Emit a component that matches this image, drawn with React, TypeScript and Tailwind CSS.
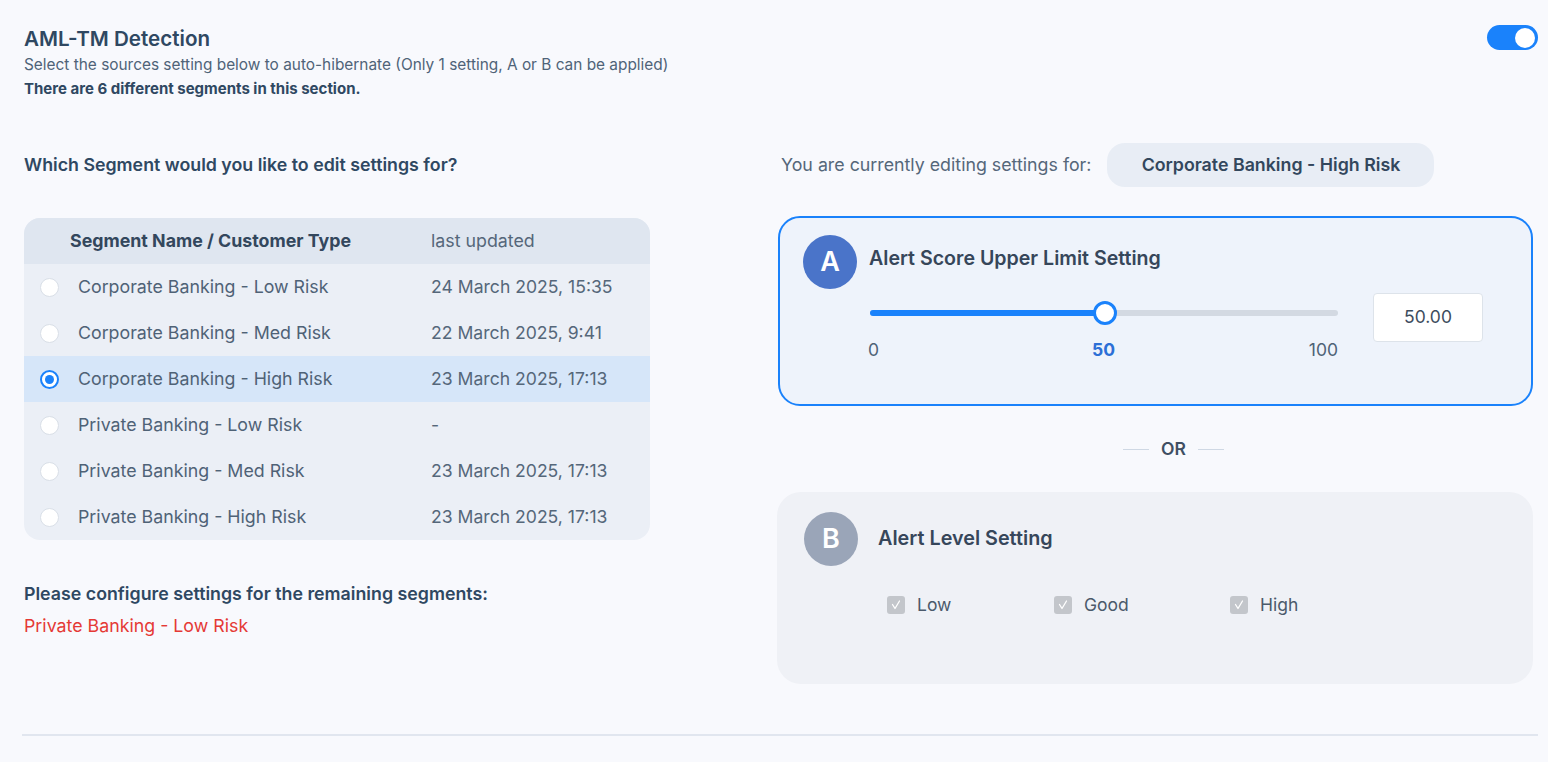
import { FC } from 'react';

type Segment = {
  name: string;
  updated: string;
};

const segments: Segment[] = [
  { name: 'Corporate Banking - Low Risk', updated: '24 March 2025, 15:35' },
  { name: 'Corporate Banking - Med Risk', updated: '22 March 2025, 9:41' },
  { name: 'Corporate Banking - High Risk', updated: '23 March 2025, 17:13' },
  { name: 'Private Banking - Low Risk', updated: '-' },
  { name: 'Private Banking - Med Risk', updated: '23 March 2025, 17:13' },
  { name: 'Private Banking - High Risk', updated: '23 March 2025, 17:13' },
];

const selectedIndex = 2;

const Radio: FC<{ checked: boolean }> = ({ checked }) =>
  checked ? (
    <span className="flex h-[19px] w-[19px] items-center justify-center rounded-full border-2 border-[#1a82fb] bg-white">
      <span className="block h-[9px] w-[9px] rounded-full bg-[#1a82fb]" />
    </span>
  ) : (
    <span className="block h-[19px] w-[19px] rounded-full border border-[#d9dfe7] bg-white" />
  );

const CheckItem: FC<{ label: string; width: string }> = ({ label, width }) => (
  <div className={`flex items-center gap-3 ${width}`}>
    <span className="flex h-[18px] w-[18px] items-center justify-center rounded-[3px] bg-[#c3c6cb]">
      <svg width="12" height="12" viewBox="0 0 12 12" fill="none">
        <path d="M2.5 5.5 L5 9.5 L9.5 2" stroke="white" strokeWidth="1.3" strokeLinecap="round" strokeLinejoin="round" />
      </svg>
    </span>
    <span className="text-[17.5px] text-[#4b5a6b]">{label}</span>
  </div>
);

const App: FC = () => {
  return (
    <div
      className="min-h-[762px] bg-[#f8f9fd] pl-6 pr-[10px] pt-[25px]"
      style={{ fontFamily: 'Inter, "Noto Sans", sans-serif' }}
    >
      <div className="flex items-start justify-between">
        <div>
          <h1 className="text-[20.6px] font-semibold leading-[28px] text-[#2f4862]">AML-TM Detection</h1>
          <p className="mt-[2px] text-[15.4px] leading-[20px] text-[#4f6378]">
            Select the sources setting below to auto-hibernate (Only 1 setting, A or B can be applied)
          </p>
          <p className="mt-[4px] text-[15px] font-bold leading-[20px] text-[#2f4862]">
            There are 6 different segments in this section.
          </p>
        </div>
        <div className="flex h-[25px] w-[51px] items-center justify-end rounded-full bg-[#1a82fb] px-[3px]">
          <span className="block h-[20px] w-[20px] rounded-full bg-white" />
        </div>
      </div>

      <div className="mt-[44px] flex">
        <div className="w-[626px]">
          <div className="flex h-[44px] items-center">
            <h2 className="text-[17.8px] font-semibold text-[#2f4862]">Which Segment would you like to edit settings for?</h2>
          </div>
          <div className="mt-[31px] overflow-hidden rounded-[16px] bg-[#ebeff6]">
            <div className="flex h-[46px] items-center bg-[#dfe6f0]">
              <span className="ml-[46px] w-[361px] text-[17.8px] font-bold text-[#33475d]">Segment Name / Customer Type</span>
              <span className="text-[17.8px] text-[#55677a]">last updated</span>
            </div>
            {segments.map((s, i) => (
              <div
                key={s.name}
                className={`flex h-[46px] items-center ${i === selectedIndex ? 'bg-[#d6e6f9]' : ''}`}
              >
                <span className="ml-[16px] w-[38px]">
                  <Radio checked={i === selectedIndex} />
                </span>
                <span className="w-[353px] text-[17.8px] text-[#4f6276]">{s.name}</span>
                <span className="text-[17.6px] text-[#55677a]">{s.updated}</span>
              </div>
            ))}
          </div>
          <p className="mt-[42px] text-[17.8px] font-semibold leading-[24px] text-[#2f4862]">
            Please configure settings for the remaining segments:
          </p>
          <p className="mt-[8px] text-[17.8px] leading-[24px] text-[#e53935]">Private Banking - Low Risk</p>
        </div>

        <div className="ml-[128px] w-[755px]">
          <div className="flex h-[44px] items-center">
            <span className="ml-[3px] text-[17.8px] text-[#55677a]">You are currently editing settings for:</span>
            <span className="ml-[16px] flex h-[44px] w-[327px] items-center justify-center rounded-[18px] bg-[#e8edf5] text-[17.8px] font-semibold text-[#33475d]">
              Corporate Banking - High Risk
            </span>
          </div>

          <div className="mt-[29px] h-[190px] rounded-[22px] border-2 border-[#1a82fb] bg-[#eef3fb] pl-[23px] pt-[17px]">
            <div className="flex items-center gap-3">
              <span className="flex h-[54px] w-[54px] items-center justify-center rounded-full bg-[#4a74c9] text-[27px] font-semibold text-white">
                A
              </span>
              <span className="-mt-[6px] text-[19.6px] font-semibold text-[#36465a]">Alert Score Upper Limit Setting</span>
            </div>
            <div className="flex">
              <div className="ml-[67px] w-[468px]">
                <div className="relative mt-[12px] h-[24px]">
                  <div className="absolute left-0 right-0 top-[9px] h-[6px] rounded-full bg-[#d3d9e2]" />
                  <div className="absolute left-0 top-[9px] h-[6px] w-[235px] rounded-full bg-[#1a82fb]" />
                  <div className="absolute left-[223px] top-0 h-[24px] w-[24px] rounded-full border-[3px] border-[#1a82fb] bg-white" />
                </div>
                <div className="relative mt-[12px] h-[24px] text-[17.5px] text-[#4f6276]">
                  <span className="absolute left-[-2px]">0</span>
                  <span className="absolute left-[222px] font-bold text-[#2c6fd6]">50</span>
                  <span className="absolute right-0">100</span>
                </div>
              </div>
              <div className="ml-[35px] mt-[4px] flex h-[49px] w-[110px] items-center justify-center rounded-[4px] border border-[#dde3ea] bg-white text-[17.5px] text-[#3d4c5e]">
                50.00
              </div>
            </div>
          </div>

          <div className="flex h-[86px] items-center justify-center gap-3 pl-[36px]">
            <span className="block h-px w-[26px] bg-[#cfd8e4]" />
            <span className="text-[17.5px] font-semibold text-[#3f4f63]">OR</span>
            <span className="block h-px w-[26px] bg-[#cfd8e4]" />
          </div>

          <div className="ml-[-1px] h-[192px] rounded-[24px] bg-[#eff1f6] pl-[27px] pt-[20px]">
            <div className="flex items-center gap-5">
              <span className="flex h-[54px] w-[54px] items-center justify-center rounded-full bg-[#9aa5b8] text-[27px] font-semibold text-white">
                B
              </span>
              <span className="text-[19.8px] font-semibold text-[#36465a]">Alert Level Setting</span>
            </div>
            <div className="ml-[83px] mt-[26px] flex">
              <CheckItem label="Low" width="w-[167px]" />
              <CheckItem label="Good" width="w-[176px]" />
              <CheckItem label="High" width="w-[120px]" />
            </div>
          </div>
        </div>
      </div>

      <div className="mt-[50px] ml-[-2px] h-[2px] bg-[#e1e6ef]" />
    </div>
  );
};

export default App;
